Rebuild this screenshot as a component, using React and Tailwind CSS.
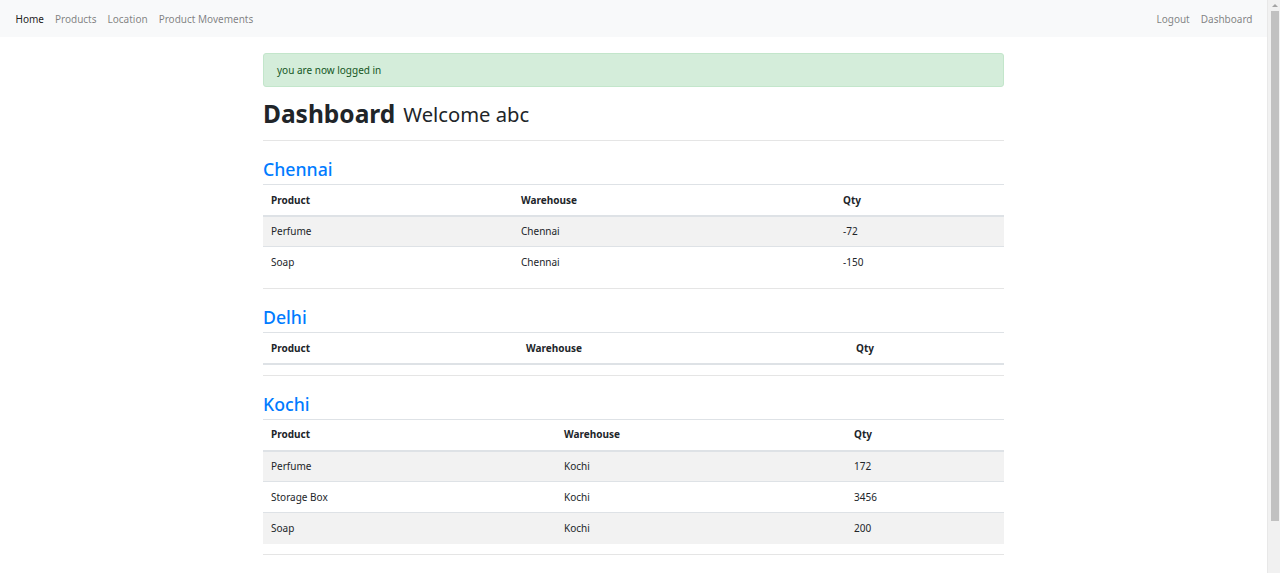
const LEFT_LINKS = ["Home", "Products", "Location", "Product Movements"];

const LOCATIONS = [
  {
    name: "Chennai",
    cols: ["w-[250px]", "w-[322px]", "w-[169px]"],
    rows: [
      ["Perfume", "Chennai", "-72"],
      ["Soap", "Chennai", "-150"],
    ],
  },
  {
    name: "Delhi",
    cols: ["w-[255px]", "w-[330px]", "w-[156px]"],
    rows: [],
  },
  {
    name: "Kochi",
    cols: ["w-[293px]", "w-[290px]", "w-[158px]"],
    rows: [
      ["Perfume", "Kochi", "172"],
      ["Storage Box", "Kochi", "3456"],
      ["Soap", "Kochi", "200"],
    ],
  },
];

function Navbar() {
  return (
    <nav className="flex h-[37px] shrink-0 items-center justify-between bg-[#f8f9fa] pr-[9px] pl-[10px] pt-[1px] text-[10px]">
      <ul className="flex items-center">
        {LEFT_LINKS.map((label, i) => (
          <li key={label}>
            <a
              className={`px-[5.5px] ${
                i === 0 ? "text-black/90" : "text-black/50"
              }`}
            >
              {label}
            </a>
          </li>
        ))}
      </ul>
      <ul className="flex items-center">
        <li>
          <a className="px-[5.5px] text-black/50">Logout</a>
        </li>
        <li>
          <a className="px-[5.5px] text-black/50">Dashboard</a>
        </li>
      </ul>
    </nav>
  );
}

function LocationTable({ loc }) {
  return (
    <section>
      <h3 className="mt-[17px] mb-[4px] h-[22px] text-[17.7px] leading-[22px] font-medium text-[#007bff]">
        {loc.name}
      </h3>
      <table className="mb-[10.4px] w-full table-fixed border-collapse text-[10px] text-[#212529]">
        <thead>
          <tr>
            {["Product", "Warehouse", "Qty"].map((h, i) => (
              <th
                key={h}
                className={`${loc.cols[i]} h-[31px] border-t border-b-2 border-[#dee2e6] px-[8px] text-left align-middle font-bold`}
              >
                {h}
              </th>
            ))}
          </tr>
        </thead>
        <tbody>
          {loc.rows.map((row, r) => (
            <tr key={r} className={r % 2 === 0 ? "bg-[#f2f2f2]" : ""}>
              {row.map((cell, c) => (
                <td
                  key={c}
                  className={`h-[31px] px-[8px] align-middle ${
                    r === 0 ? "" : "border-t border-[#dee2e6]"
                  }`}
                >
                  {cell}
                </td>
              ))}
            </tr>
          ))}
        </tbody>
      </table>
      <hr className="border-t border-black/10" />
    </section>
  );
}

function Scrollbar() {
  return (
    <div className="flex w-[13px] shrink-0 flex-col items-center border-l border-[#e8e8e8] bg-[#f1f1f1] pl-[1px]">
      <div className="mt-[4px] h-0 w-0 border-x-[3px] border-b-[3px] border-x-transparent border-b-[#a3a3a3]" />
      <div className="mt-[4px] h-[510px] w-[8px] bg-[#c1c1c1]" />
    </div>
  );
}

export default function App() {
  return (
    <div
      className="flex h-[573px] w-[1280px] overflow-hidden bg-white text-[#212529]"
      style={{ fontFamily: '"Noto Sans", "Open Sans", sans-serif' }}
    >
      <div className="flex min-w-0 flex-1 flex-col">
        <Navbar />
        <main className="mx-auto w-[741px] pt-[16px]">
          <div className="mb-[10.4px] flex h-[34px] items-center rounded-[3px] border border-[#c3e6cb] bg-[#d4edda] px-[13px] text-[10px] text-[#155724]">
            you are now logged in
          </div>
          <h1 className="mb-[9px] flex h-[34px] items-end gap-[8px] pb-[2px] text-[24.5px] leading-[30px] font-bold text-[#212529]">
            Dashboard
            <small className="text-[20.2px] leading-[29px] font-normal">
              Welcome abc
            </small>
          </h1>
          <hr className="border-t border-black/10" />
          {LOCATIONS.map((loc) => (
            <LocationTable key={loc.name} loc={loc} />
          ))}
        </main>
      </div>
      <Scrollbar />
    </div>
  );
}
